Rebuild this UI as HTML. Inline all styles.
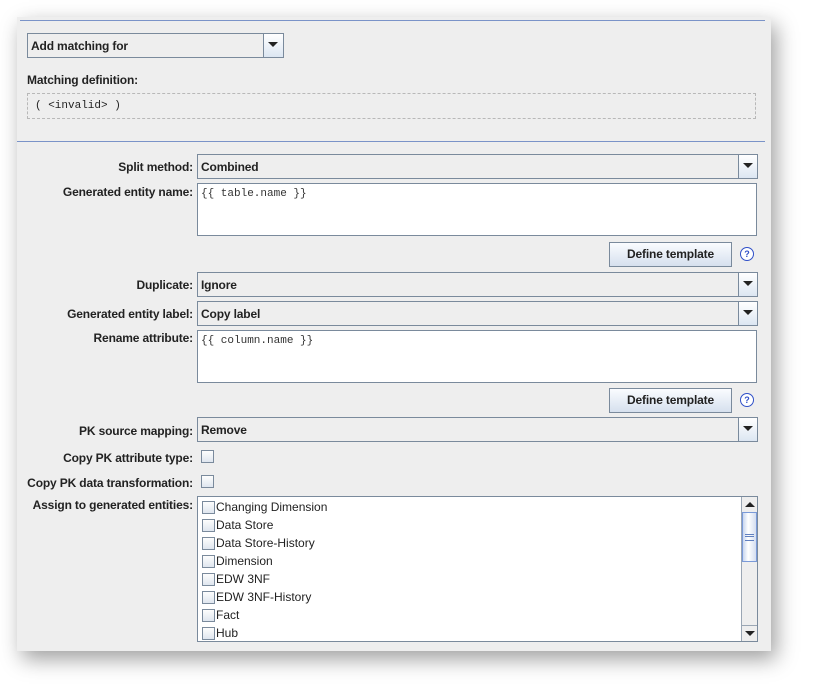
<!DOCTYPE html>
<html><head><style>
body{margin:0;width:819px;height:699px;background:#fff;position:relative;font-family:"Liberation Sans",Arial,sans-serif;font-size:12px;color:#222;overflow:hidden}
.panel{position:absolute;left:17px;top:17px;width:754px;height:634px;background:#eeeeee;box-shadow:5px 8px 20px rgba(0,0,0,.38)}
.a{position:absolute}
.hl{position:absolute;height:1px;background:#7a93c8}
.combo{position:absolute;height:23px;border:1px solid #7a8a9c;background:#eeeeee;box-sizing:border-box}
.combo span{position:absolute;left:3px;top:4px;font-weight:bold;letter-spacing:-0.15px}
.combo .btn{position:absolute;right:0;top:0;width:18px;height:21px;border-left:1px solid #7a8a9c;background:linear-gradient(#fff,#dce6f2)}
.combo .btn:after{content:"";position:absolute;left:4px;top:8px;border-left:5px solid transparent;border-right:5px solid transparent;border-top:5px solid #222}
.lbl{position:absolute;right:626px;font-weight:bold;white-space:nowrap;letter-spacing:-0.15px}
.ta{position:absolute;left:197px;width:560px;height:53px;border:1px solid #7a8a9c;background:#fff;box-sizing:border-box;font-family:"Liberation Mono",monospace;font-size:11px;padding:4px 3px;color:#333}
.bt{position:absolute;left:609px;width:123px;height:25px;border:1px solid #7a8a9c;box-sizing:border-box;background:linear-gradient(#fafcff,#d6e0ee);text-align:center;line-height:23px;font-weight:bold;letter-spacing:-0.15px}
.q{position:absolute;left:740px;width:12px;height:12px;border:1.5px solid #3050c8;border-radius:50%;color:#3050c8;font-size:9px;font-weight:bold;text-align:center;line-height:12px;background:#fff}
.cb{position:absolute;width:11px;height:11px;border:1px solid #7a8a9c;background:linear-gradient(#fdfdfd,#dfe6ef)}
.li{position:absolute;left:4px;height:18px;white-space:nowrap}
.li i{position:absolute;left:0;top:1px;width:11px;height:11px;border:1px solid #7a8a9c;background:linear-gradient(#fdfdfd,#dfe6ef)}
.li b{font-weight:normal;position:absolute;left:14px;top:0;font-size:12px;color:#222}
</style></head><body>
<div class="panel"></div>
<div class="hl" style="left:20px;top:20px;width:745px"></div>
<div class="combo" style="left:27px;top:33px;width:257px;height:25px"><span style="top:5px">Add matching for</span><div class="btn" style="width:19px;height:23px"></div></div>
<div class="a" style="left:27px;top:73px;font-weight:bold;letter-spacing:-0.15px">Matching definition:</div>
<div class="a" style="left:27px;top:93px;width:729px;height:26px;border:1px dashed #b8b8b8;box-sizing:border-box"></div>
<div class="a" style="left:35px;top:100px;font-family:'Liberation Mono',monospace;font-size:11px">( &lt;invalid&gt; )</div>
<div class="hl" style="left:17px;top:141px;width:748px"></div>

<div class="lbl" style="top:160px">Split method:</div>
<div class="combo" style="left:197px;top:154px;width:561px;height:25px"><span style="top:5px">Combined</span><div class="btn" style="height:23px"></div></div>
<div class="lbl" style="top:185px">Generated entity name:</div>
<div class="ta" style="top:183px">{{ table.name }}</div>
<div class="bt" style="top:242px">Define template</div>
<div class="q" style="top:247px">?</div>

<div class="lbl" style="top:278px">Duplicate:</div>
<div class="combo" style="left:197px;top:272px;width:561px;height:25px"><span style="top:5px">Ignore</span><div class="btn" style="height:23px"></div></div>
<div class="lbl" style="top:307px">Generated entity label:</div>
<div class="combo" style="left:197px;top:301px;width:561px;height:25px"><span style="top:5px">Copy label</span><div class="btn" style="height:23px"></div></div>
<div class="lbl" style="top:331px">Rename attribute:</div>
<div class="ta" style="top:330px">{{ column.name }}</div>
<div class="bt" style="top:388px">Define template</div>
<div class="q" style="top:393px">?</div>

<div class="lbl" style="top:424px">PK source mapping:</div>
<div class="combo" style="left:197px;top:417px;width:561px;height:25px"><span style="top:5px">Remove</span><div class="btn" style="height:23px"></div></div>
<div class="lbl" style="top:451px">Copy PK attribute type:</div>
<div class="cb" style="left:201px;top:450px"></div>
<div class="lbl" style="top:476px">Copy PK data transformation:</div>
<div class="cb" style="left:201px;top:475px"></div>
<div class="lbl" style="top:498px">Assign to generated entities:</div>
<div class="a" style="left:197px;top:496px;width:561px;height:146px;border:1px solid #7a8a9c;box-sizing:border-box;background:#fff">
 <div class="li" style="top:3px"><i></i><b>Changing Dimension</b></div>
 <div class="li" style="top:21px"><i></i><b>Data Store</b></div>
 <div class="li" style="top:39px"><i></i><b>Data Store-History</b></div>
 <div class="li" style="top:57px"><i></i><b>Dimension</b></div>
 <div class="li" style="top:75px"><i></i><b>EDW 3NF</b></div>
 <div class="li" style="top:93px"><i></i><b>EDW 3NF-History</b></div>
 <div class="li" style="top:111px"><i></i><b>Fact</b></div>
 <div class="li" style="top:129px"><i></i><b>Hub</b></div>
 <div class="a" style="left:543px;top:0;width:15px;height:144px;background:#eeeeee;border-left:1px solid #9aa6b4">
  <div class="a" style="left:3px;top:5px;border-left:5px solid transparent;border-right:5px solid transparent;border-bottom:5px solid #222"></div>
  <div class="a" style="left:0;top:15px;width:13px;height:48px;border:1px solid #7a9ad8;background:linear-gradient(90deg,#c8d6ee,#fff 40%,#d4def0)"></div>
  <div class="a" style="left:3px;top:37px;width:9px;height:5px;border-top:1px solid #6080c0;border-bottom:1px solid #6080c0"></div>
  <div class="a" style="left:3px;top:39px;width:9px;height:1px;background:#6080c0"></div>
  <div class="a" style="left:0;top:128px;width:15px;height:1px;background:#9aa6b4"></div>
  <div class="a" style="left:3px;top:134px;border-left:5px solid transparent;border-right:5px solid transparent;border-top:5px solid #222"></div>
 </div>
</div>
</body></html>
